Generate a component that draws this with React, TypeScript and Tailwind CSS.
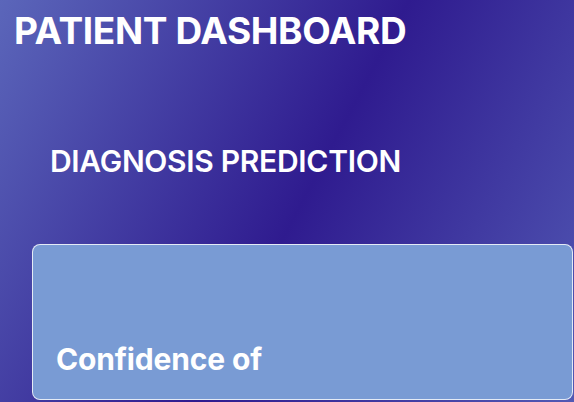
export default function App() {
  return (
    <div className="min-h-screen w-full overflow-hidden bg-[linear-gradient(118deg,#5b66ba_0%,#2f1b8f_52%,#5259b4_100%)] font-['Inter',sans-serif] text-white">
      <h1 className="pl-[14px] pt-[12px] text-[37px] font-bold leading-none tracking-[-0.01em]">
        PATIENT DASHBOARD
      </h1>

      <h2 className="mt-[97px] pl-[50px] text-[30px] font-semibold leading-none tracking-[-0.01em]">
        DIAGNOSIS PREDICTION
      </h2>

      <section className="ml-8 mr-px mt-[68px] h-[156px] rounded-lg border border-white/80 bg-[#799bd4] pl-[23px] pt-[99px]">
        <p className="text-[30px] font-bold leading-none tracking-[-0.005em]">Confidence of</p>
      </section>
    </div>
  );
}
